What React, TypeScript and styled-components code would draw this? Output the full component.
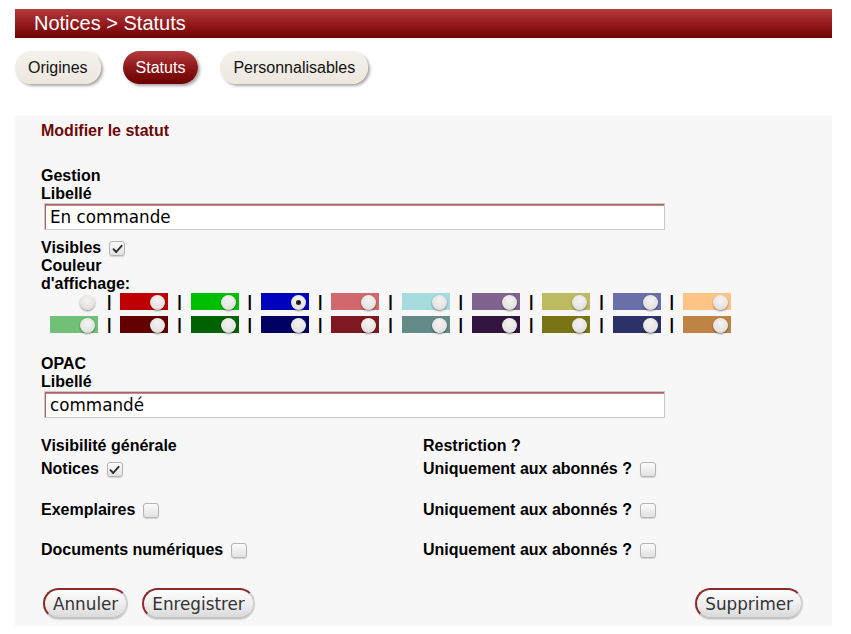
import styled, { createGlobalStyle } from 'styled-components';

const GlobalStyle = createGlobalStyle`
  body {
    margin: 0;
    background: #ffffff;
    font-family: "Liberation Sans", Arial, sans-serif;
    color: #000;
  }
`;

const Page = styled.div`
  width: 817px;
  padding: 9px 0 0 15px;
`;

const Header = styled.div`
  height: 29px;
  line-height: 29px;
  padding-left: 19px;
  font-size: 20px;
  color: #fff;
  background: linear-gradient(to bottom, #b43a3c 0%, #8e1618 60%, #6a0202 100%);
`;

const Tabs = styled.div`
  display: flex;
  gap: 22px;
  margin-top: 13px;
`;

const Tab = styled.div<{ $active?: boolean }>`
  height: 33px;
  line-height: 33px;
  padding: 0 13px;
  border-radius: 17px;
  font-size: 16px;
  color: ${(p) => (p.$active ? '#fff' : '#111')};
  background: ${(p) =>
    p.$active
      ? 'linear-gradient(to bottom, #b53c3e 0%, #8a1416 55%, #6d0000 100%)'
      : 'linear-gradient(to bottom, #f4f1ec 0%, #ede7de 100%)'};
  box-shadow: 2px 2px 3px rgba(0, 0, 0, 0.35);
`;

const Panel = styled.div`
  margin-top: 31px;
  background: #f7f7f7;
  padding: 7px 29px 7px 26px;
`;

const Title = styled.div`
  font-size: 16px;
  line-height: 18px;
  font-weight: bold;
  color: #6e0808;
`;

const Section = styled.div<{ $top: number }>`
  margin-top: ${(p) => p.$top}px;
`;

const Label = styled.div<{ $narrow?: boolean }>`
  font-size: 16px;
  line-height: 18px;
  font-weight: bold;
  width: ${(p) => (p.$narrow ? '100px' : 'auto')};
`;

const TextInput = styled.input`
  display: block;
  box-sizing: border-box;
  width: 621px;
  height: 27px;
  margin: 0 0 0 3px;
  padding: 0 5px;
  border: 1px solid #c9c9c9;
  box-shadow: inset 1px 1px 0 #b35f62, inset 0 2px 0 #c88a8c;
  background: #fff;
  font-family: "DejaVu Sans", Verdana, sans-serif;
  font-size: 16.8px;
  color: #000;
  outline: none;
`;

const CheckRow = styled.div<{ $top?: number }>`
  display: flex;
  align-items: center;
  height: 18px;
  margin-top: ${(p) => p.$top ?? 0}px;
  font-size: 16px;
  font-weight: bold;
`;

const Box = styled.span`
  display: inline-flex;
  align-items: center;
  justify-content: center;
  box-sizing: border-box;
  width: 16px;
  height: 15px;
  margin-left: 8px;
  margin-top: 1px;
  border: 1px solid #b4b4b4;
  border-radius: 3px;
  background: linear-gradient(to bottom, #fbfbfb 0%, #e2e2e2 100%);
  box-shadow: 0 1px 1px rgba(0, 0, 0, 0.15);
`;

const ColorGrid = styled.div`
  display: flex;
  flex-direction: column;
  gap: 6px;
  margin: 0 0 0 9px;
`;

const ColorRow = styled.div`
  display: flex;
  align-items: center;
`;

const Swatch = styled.span<{ $color: string }>`
  display: flex;
  align-items: center;
  justify-content: flex-end;
  width: 48px;
  height: 17px;
  padding-right: 3px;
  box-sizing: border-box;
  background: ${(p) => p.$color};
`;

const Knob = styled.span<{ $on?: boolean }>`
  position: relative;
  width: 15px;
  height: 15px;
  border-radius: 50%;
  transform: translateY(1px);
  background: radial-gradient(circle at 50% 35%, #f4f3f2 0%, #e6e4e2 60%, #d2d0ce 100%);
  box-shadow: 0 1px 2px rgba(0, 0, 0, 0.45);

  &::after {
    content: "";
    display: ${(p) => (p.$on ? 'block' : 'none')};
    position: absolute;
    left: 5px;
    top: 5px;
    width: 5px;
    height: 5px;
    border-radius: 50%;
    background: #1a1a1a;
  }
`;

const Sep = styled.span`
  width: 22.33px;
  text-align: center;
  font-size: 16px;
  font-weight: bold;
  line-height: 17px;
`;

const Columns = styled.div`
  display: grid;
  grid-template-columns: 382px 1fr;
  margin-top: 19px;
`;

const Column = styled.div``;

const Actions = styled.div`
  display: flex;
  justify-content: space-between;
  margin: 29px 0 0 2px;
`;

const Group = styled.div`
  display: flex;
  gap: 14px;
`;

const Button = styled.button`
  height: 31px;
  padding: 0 8px;
  border-radius: 16px;
  border: 2px solid;
  border-color: #8d2a2c #cfcfcf #c4c4c4 #8d2a2c;
  background: linear-gradient(to bottom, #fdfdfd 0%, #efefef 50%, #dadada 100%);
  box-shadow: 0 1px 1px rgba(0, 0, 0, 0.12);
  font-family: "DejaVu Sans", Verdana, sans-serif;
  font-size: 16.8px;
  color: #333;
`;

const Check = ({ on }: { on?: boolean }) => (
  <Box>
    {on && (
      <svg width="11" height="10" viewBox="0 0 11 10">
        <path d="M1.5 5.2 L4.2 8 L9.6 1.8" fill="none" stroke="#2a2a2a" strokeWidth="1.9" strokeLinecap="round" strokeLinejoin="round" />
      </svg>
    )}
  </Box>
);

const row1 = ['transparent', '#bf0000', '#00bf00', '#0000bf', '#d0686e', '#a6dcdd', '#80628f', '#bcbb62', '#6970a9', '#ffc486'];
const row2 = ['#70c077', '#620000', '#006200', '#000062', '#7f1820', '#638a87', '#31143f', '#7a7514', '#2c3268', '#bf8346'];

const Colors = ({ colors, selected }: { colors: string[]; selected?: number }) => (
  <ColorRow>
    {colors.map((c, i) => (
      <span key={i} style={{ display: 'contents' }}>
        {i > 0 && <Sep>|</Sep>}
        <Swatch $color={c}>
          <Knob $on={i === selected} />
        </Swatch>
      </span>
    ))}
  </ColorRow>
);

export default function App() {
  return (
    <Page>
      <GlobalStyle />
      <Header>Notices &gt; Statuts</Header>
      <Tabs>
        <Tab>Origines</Tab>
        <Tab $active>Statuts</Tab>
        <Tab>Personnalisables</Tab>
      </Tabs>
      <Panel>
        <Title>Modifier le statut</Title>
        <Section $top={27}>
          <Label>Gestion</Label>
          <Label>Libellé</Label>
          <TextInput defaultValue="En commande" />
          <CheckRow $top={9}>
            Visibles <Check on />
          </CheckRow>
          <Label $narrow>Couleur d'affichage:</Label>
          <ColorGrid>
            <Colors colors={row1} selected={3} />
            <Colors colors={row2} />
          </ColorGrid>
        </Section>
        <Section $top={22}>
          <Label>OPAC</Label>
          <Label>Libellé</Label>
          <TextInput defaultValue="commandé" />
        </Section>
        <Columns>
          <Column>
            <Label>Visibilité générale</Label>
            <CheckRow $top={5}>
              Notices <Check on />
            </CheckRow>
            <CheckRow $top={23}>
              Exemplaires <Check />
            </CheckRow>
            <CheckRow $top={22}>
              Documents numériques <Check />
            </CheckRow>
          </Column>
          <Column>
            <Label>Restriction ?</Label>
            <CheckRow $top={5}>
              Uniquement aux abonnés ? <Check />
            </CheckRow>
            <CheckRow $top={23}>
              Uniquement aux abonnés ? <Check />
            </CheckRow>
            <CheckRow $top={22}>
              Uniquement aux abonnés ? <Check />
            </CheckRow>
          </Column>
        </Columns>
        <Actions>
          <Group>
            <Button>Annuler</Button>
            <Button>Enregistrer</Button>
          </Group>
          <Button>Supprimer</Button>
        </Actions>
      </Panel>
    </Page>
  );
}
